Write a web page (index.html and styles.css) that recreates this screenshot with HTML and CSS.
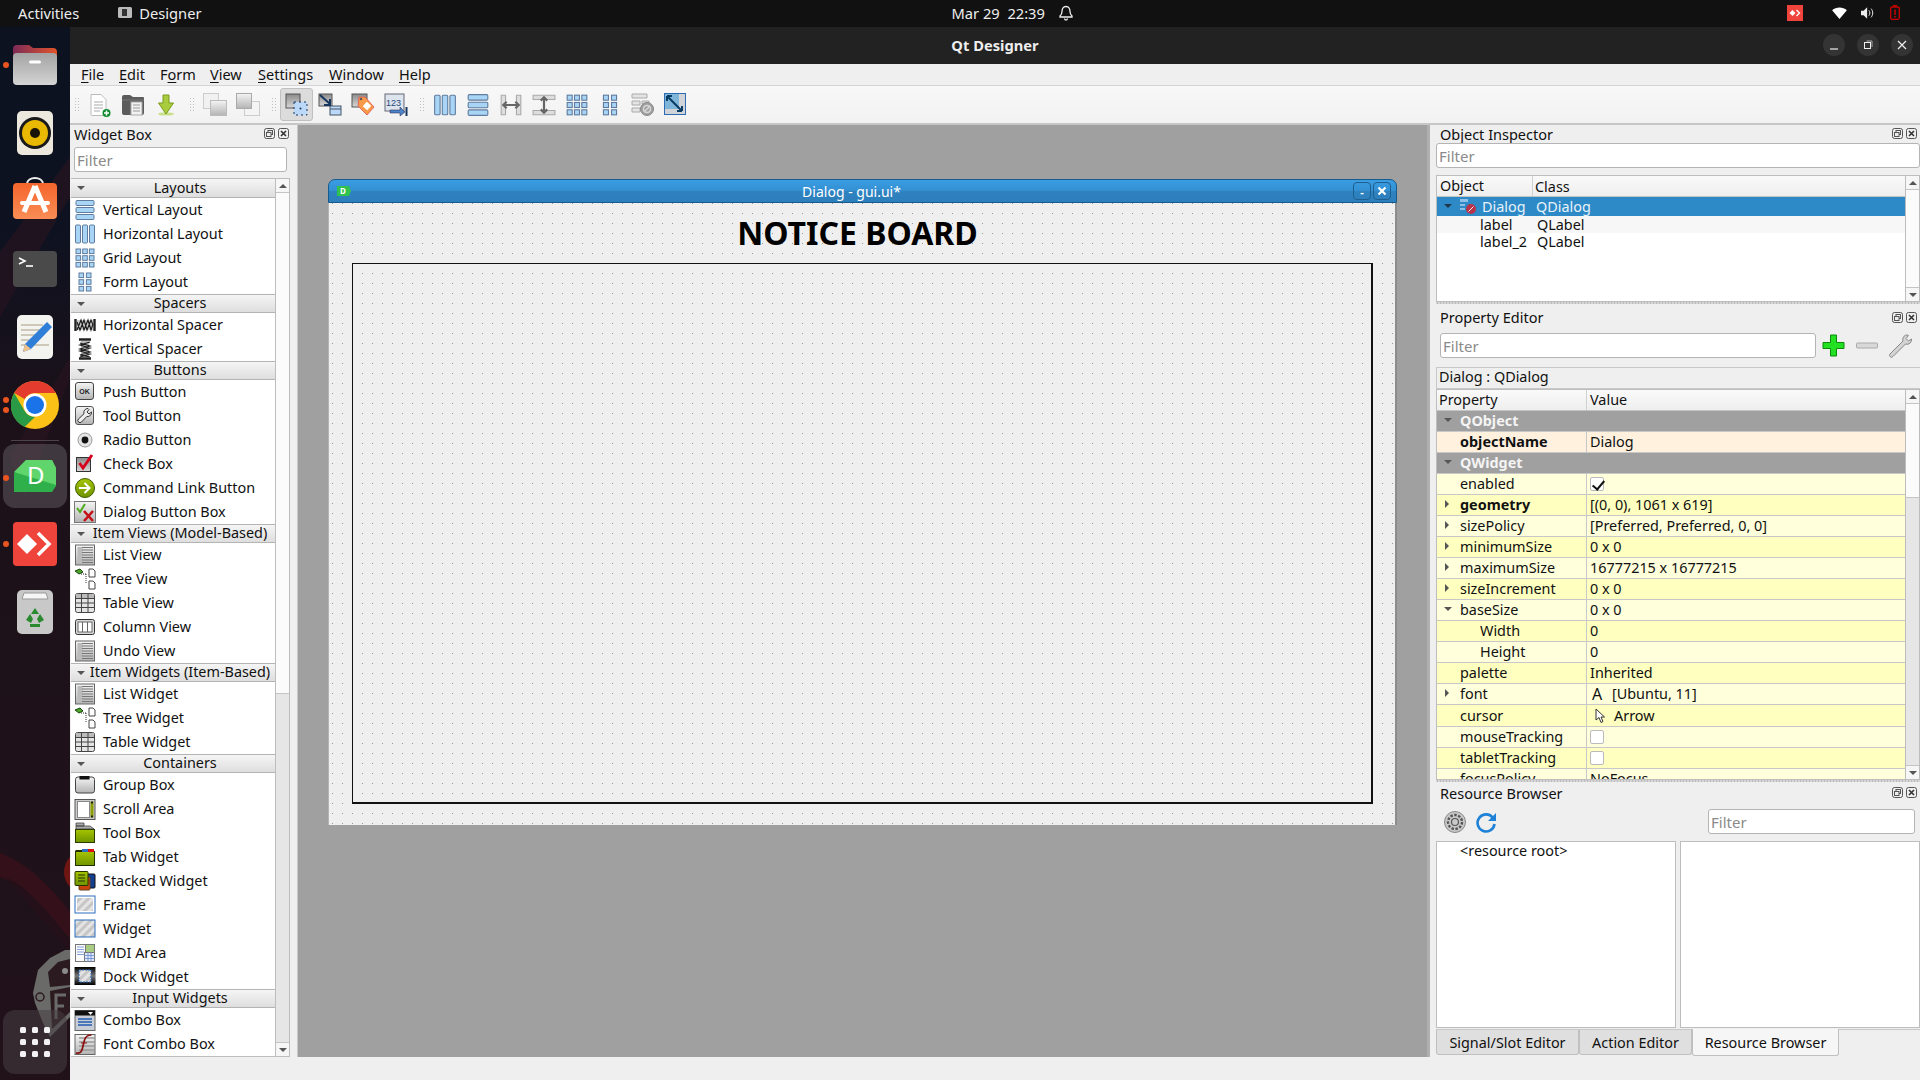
FILE: index.html
```html
<!DOCTYPE html>
<html lang="en">
<head>
  <meta charset="UTF-8">
  <title>Qt Designer</title>
  <link rel="stylesheet" href="styles.css">
</head>
<body>

<!-- icon sheet -->
<svg class="sheet" xmlns="http://www.w3.org/2000/svg">
  <defs>
    <linearGradient id="g-gray" x1="0" y1="0" x2="0" y2="1"><stop offset="0" stop-color="#f4f4f4"/><stop offset="1" stop-color="#b4b4b4"/></linearGradient>
    <linearGradient id="g-dark" x1="0" y1="0" x2="0" y2="1"><stop offset="0" stop-color="#8a8a8a"/><stop offset="1" stop-color="#d8d8d8"/></linearGradient>
    <linearGradient id="g-green" x1="0" y1="0" x2="0" y2="1"><stop offset="0" stop-color="#a6c400"/><stop offset="1" stop-color="#6f9400"/></linearGradient>
    <linearGradient id="g-black" x1="0" y1="0" x2="0" y2="1"><stop offset="0" stop-color="#000"/><stop offset=".5" stop-color="#777"/><stop offset="1" stop-color="#000"/></linearGradient>
    <linearGradient id="g-folder" x1="0" y1="0" x2="0" y2="1"><stop offset="0" stop-color="#a3a3a3"/><stop offset="1" stop-color="#d4d4d4"/></linearGradient>
    <linearGradient id="g-flap" x1="0" y1="0" x2="1" y2="0"><stop offset="0" stop-color="#7c2a58"/><stop offset="1" stop-color="#e2552a"/></linearGradient>
    <linearGradient id="g-store" x1="0" y1="0" x2="0" y2="1"><stop offset="0" stop-color="#f5652c"/><stop offset="1" stop-color="#f98d55"/></linearGradient>
    <pattern id="p-hatch" width="6" height="6" patternUnits="userSpaceOnUse" patternTransform="rotate(45)"><rect width="6" height="6" fill="#e4e4e4"/><rect width="3" height="6" fill="#c6c6c6"/></pattern>

    <symbol id="i-vlay" viewBox="0 0 22 22"><g fill="#a8d4f6" stroke="#5f7c9e"><rect x="2" y="1.500" width="18" height="5" rx="1"/><rect x="2" y="8.500" width="18" height="5" rx="1"/><rect x="2" y="15.500" width="18" height="5" rx="1"/></g></symbol>
    <symbol id="i-hlay" viewBox="0 0 22 22"><g fill="#a8d4f6" stroke="#5f7c9e"><rect x="1.500" y="2" width="5" height="18" rx="1"/><rect x="8.500" y="2" width="5" height="18" rx="1"/><rect x="15.500" y="2" width="5" height="18" rx="1"/></g></symbol>
    <symbol id="i-grid" viewBox="0 0 22 22"><g fill="#a8d4f6" stroke="#5f7c9e"><rect x="2" y="2" width="4.600" height="4.600"/><rect x="8.700" y="2" width="4.600" height="4.600"/><rect x="15.400" y="2" width="4.600" height="4.600"/><rect x="2" y="8.700" width="4.600" height="4.600"/><rect x="8.700" y="8.700" width="4.600" height="4.600"/><rect x="15.400" y="8.700" width="4.600" height="4.600"/><rect x="2" y="15.400" width="4.600" height="4.600"/><rect x="8.700" y="15.400" width="4.600" height="4.600"/><rect x="15.400" y="15.400" width="4.600" height="4.600"/></g></symbol>
    <symbol id="i-form" viewBox="0 0 22 22"><g fill="#a8d4f6" stroke="#5f7c9e"><rect x="5" y="2" width="4.600" height="4.600"/><rect x="12.400" y="2" width="4.600" height="4.600"/><rect x="5" y="8.700" width="4.600" height="4.600"/><rect x="12.400" y="8.700" width="4.600" height="4.600"/><rect x="5" y="15.400" width="4.600" height="4.600"/><rect x="12.400" y="15.400" width="4.600" height="4.600"/></g></symbol>
    <symbol id="i-hspace" viewBox="0 0 22 22"><path d="M1.500 5v12M20.500 5v12" stroke="#222" stroke-width="2.400"/><path d="M3 6h16v10H3z" fill="#ccc"/><path d="M3 16l4-10 3 10 4-10 3 10 2-6M3 8l3 8 4-10 3 10 4-10 2 5" fill="none" stroke="#1d1d1d" stroke-width="1.200"/></symbol>
    <symbol id="i-vspace" viewBox="0 0 22 22"><path d="M5 1.500h12M5 20.500h12" stroke="#222" stroke-width="2.400"/><path d="M7 3h8v16H7z" fill="#bbb"/><path d="M6 5l10 3-10 3 10 3-10 3 10 2M16 4L6 7l10 3-10 3 10 3-10 3" fill="none" stroke="#1d1d1d" stroke-width="1.200"/></symbol>
    <symbol id="i-push" viewBox="0 0 22 22"><rect x="1.500" y="1.500" width="18" height="17" rx="2.500" fill="url(#g-gray)" stroke="#444"/><text x="10.500" y="12.500" class="ok">OK</text></symbol>
    <symbol id="i-tool" viewBox="0 0 22 22"><rect x="1.500" y="1.500" width="18" height="18" rx="2.500" fill="url(#g-gray)" stroke="#555"/><path d="M14 3.500a4 4 0 0 0-4 5.200L4.500 14a2 2 0 0 0 3 3l5.300-5.500A4 4 0 0 0 17.500 7l-2.500 2-2-2 2-2.500z" fill="#eee" stroke="#333"/></symbol>
    <symbol id="i-radio" viewBox="0 0 22 22"><circle cx="11" cy="11" r="7" fill="#e4e4e4" stroke="#999"/><circle cx="11" cy="11" r="3.400" fill="#111"/></symbol>
    <symbol id="i-check" viewBox="0 0 22 22"><rect x="2.500" y="4.500" width="14" height="14" fill="url(#g-dark)" stroke="#333"/><path d="M5.500 10l3.500 5 9-13" fill="none" stroke="#d5001c" stroke-width="2.800"/></symbol>
    <symbol id="i-cmd" viewBox="0 0 22 22"><circle cx="11" cy="11" r="9.500" fill="url(#g-green)" stroke="#3e5a00"/><path d="M5 11h10M10.500 6l5 5-5 5" fill="none" stroke="#fff" stroke-width="2"/></symbol>
    <symbol id="i-dbox" viewBox="0 0 22 22"><rect x=".5" y=".5" width="21" height="21" fill="url(#g-gray)" stroke="#777"/><path d="M3 7l3 4 5-8" fill="none" stroke="#4cab1c" stroke-width="2"/><path d="M10 10l9 10M19 10l-9 10" stroke="#c4111a" stroke-width="2.600"/></symbol>
    <symbol id="i-list" viewBox="0 0 22 22"><rect x="1.500" y="1" width="19" height="20" fill="url(#g-gray)" stroke="#666"/><path d="M6 3v16" stroke="#bbb" stroke-width="5"/><path d="M8 3.500h11M8 6h11M8 8.500h11M8 11h11M8 13.500h11M8 16h11M8 18.500h11" stroke="#777"/></symbol>
    <symbol id="i-tree" viewBox="0 0 22 22"><path d="M1 3l5-2 3 3-4 2z" fill="#4ea32d" stroke="#17470a"/><path d="M7 6h5M12 6v10" stroke="#333" stroke-dasharray="1 1"/><path d="M15 1h4l2 2v6h-6zM15 13h4l2 2v6h-6z" fill="#fff" stroke="#444"/></symbol>
    <symbol id="i-table" viewBox="0 0 22 22"><rect x="1.500" y="1.500" width="19" height="19" rx="2" fill="#e4e4e4" stroke="#444"/><rect x="2" y="2" width="18" height="4" fill="#bbb"/><path d="M1.500 6.500h19M1.500 11h19M1.500 15.500h19M7.500 1.500v19M14 1.500v19" stroke="#444"/></symbol>
    <symbol id="i-column" viewBox="0 0 22 22"><rect x="1.500" y="3.500" width="19" height="15" rx="2" fill="#d8d8d8" stroke="#333"/><rect x="4" y="6" width="14" height="10" fill="#fff" stroke="#666"/><path d="M8.500 6v10M13.500 6v10" stroke="#666"/></symbol>
    <symbol id="i-group" viewBox="0 0 22 22"><rect x="1.500" y="3" width="19" height="16" rx="2.500" fill="url(#g-gray)" stroke="#444"/><rect x="5.500" y="2" width="10" height="3.500" fill="#111"/></symbol>
    <symbol id="i-scroll" viewBox="0 0 22 22"><rect x="1" y="1.500" width="20" height="20" fill="#ccc" stroke="#555"/><rect x="3.500" y="3.500" width="12" height="16" fill="#fff" stroke="#888"/><rect x="16.500" y="3.500" width="3" height="16" fill="#8ba000"/><path d="M17 3.500h2v2h-2zM17 17.500h2v2h-2z" fill="#222"/></symbol>
    <symbol id="i-toolbox" viewBox="0 0 22 22"><path d="M2 1h8v3H2zM2 4h14l4 3H2z" fill="#aaa" stroke="#444" stroke-width=".8"/><rect x="1.500" y="7.500" width="19" height="13" fill="url(#g-green)" stroke="#2b3a00"/></symbol>
    <symbol id="i-tab" viewBox="0 0 22 22"><rect x="1.500" y="5.500" width="19" height="14" fill="url(#g-green)" stroke="#223000"/><rect x="8" y="3" width="6" height="3" fill="#2a6fc4"/><rect x="14" y="3" width="6" height="3" fill="#d11"/><rect x="1.500" y="4" width="6.500" height="2" fill="#223000"/></symbol>
    <symbol id="i-stack" viewBox="0 0 22 22"><rect x="11" y="4" width="10" height="14" rx="1" fill="#123f8e" stroke="#111"/><rect x="5" y="7" width="11" height="13" rx="1" fill="#c9420b" stroke="#642"/><rect x="1" y="1.500" width="13" height="14" rx="1" fill="url(#g-green)" stroke="#273400"/><path d="M4 5h7M4 8h7M4 11h7" stroke="#223000"/></symbol>
    <symbol id="i-frame" viewBox="0 0 22 22"><rect x="1" y="2" width="20" height="17" fill="#fff" stroke="#2a6dbd"/><rect x="3" y="4" width="16" height="13" fill="url(#p-hatch)"/></symbol>
    <symbol id="i-widget" viewBox="0 0 22 22"><rect x="1" y="2" width="20" height="17" fill="url(#p-hatch)" stroke="#2a6dbd"/></symbol>
    <symbol id="i-mdi" viewBox="0 0 22 22"><rect x="1.500" y="2.500" width="10" height="17" fill="#fafafa" stroke="#777"/><rect x="11.500" y="2.500" width="9" height="8" fill="#a8cc82" stroke="#777"/><rect x="10.500" y="10.500" width="10" height="9" fill="#dbe7f8" stroke="#777"/><path d="M3 5h7M3 7.500h7M3 10h7M3 12.500h7M10.500 13.500h10M10.500 16.500h10M14 10.500v9M17 10.500v9" stroke="#6a8cd0" stroke-width=".8"/></symbol>
    <symbol id="i-dock" viewBox="0 0 22 22"><rect x=".5" y="1" width="21" height="18" fill="url(#g-black)"/><rect x="5" y="4" width="12" height="12" fill="url(#p-hatch)" stroke="#2a6dbd" stroke-dasharray="2 1"/></symbol>
    <symbol id="i-combo" viewBox="0 0 22 22"><rect x="1" y="1.500" width="20" height="20" fill="#c8ccd4" stroke="#666"/><rect x="1" y="1.500" width="20" height="5" fill="#111"/><path d="M14 3h5l-2.500 3z" fill="#fff"/><path d="M4 10h14M4 13h14M4 16h14" stroke="#4a78bb" stroke-width="2"/></symbol>
    <symbol id="i-fcombo" viewBox="0 0 22 22"><rect x="1" y="1.500" width="20" height="20" fill="url(#g-gray)" stroke="#666"/><path d="M5 5h16M5 9h16M5 13h16M5 17h16" stroke="#999" stroke-width="1.400"/><path d="M2 20c5 1 6-2 7-7l1.500-6c1-3.500 3-5 7-5" fill="none" stroke="#8a1010" stroke-width="1.700"/><path d="M7 10h6" stroke="#8a1010"/></symbol>

    <symbol id="t-new" viewBox="0 0 24 24"><path d="M3 1.500h10l5 5v15a1 1 0 0 1-1 1H4a1 1 0 0 1-1-1z" fill="#fff" stroke="#bbb"/><path d="M6 9h9M6 12h9M6 15h9M6 18h6" stroke="#aaa"/><circle cx="18.500" cy="20" r="4" fill="#0e8a2e"/><path d="M18.500 17.500v5M16 20h5" stroke="#fff" stroke-width="1.500"/></symbol>
    <symbol id="t-open" viewBox="0 0 24 24"><path d="M1 4a2 2 0 0 1 2-2h6l3 2h10a1 1 0 0 1 1 1v15a2 2 0 0 1-2 2H3a2 2 0 0 1-2-2z" fill="#5c5c5c"/><path d="M1 7h22" stroke="#777"/><rect x="10" y="9" width="11" height="13" fill="#f2f2f2" stroke="#aaa"/><path d="M12 12h7M12 15h7M12 18h7" stroke="#999"/></symbol>
    <symbol id="t-save" viewBox="0 0 24 24"><ellipse cx="12" cy="21" rx="8" ry="1.600" fill="#c9e08a"/><path d="M9 2h6v8h4.500L12 21 4.500 10H9z" fill="#a9cc3e" stroke="#7a9b1a"/></symbol>
    <symbol id="t-back" viewBox="0 0 24 24"><rect x=".5" y=".5" width="15" height="15" fill="#f1f1f1" stroke="#ccc"/><rect x="7.500" y="7.500" width="16" height="15" fill="url(#g-gray)" stroke="#bbb"/></symbol>
    <symbol id="t-front" viewBox="0 0 24 24"><rect x="8.500" y="8.500" width="15" height="14" fill="#f4f4f4" stroke="#ccc"/><rect x=".5" y=".5" width="15" height="15" fill="url(#g-gray)" stroke="#aaa"/></symbol>
    <symbol id="t-edit" viewBox="0 0 24 24"><rect x="1" y="1" width="14" height="14" fill="url(#g-dark)" stroke="#555"/><rect x="9" y="9" width="13" height="13" fill="#bcd8f8" stroke="#17365f" stroke-dasharray="2 3"/><circle cx="15.500" cy="15.500" r="1" fill="#17365f"/></symbol>
    <symbol id="t-signal" viewBox="0 0 24 24"><rect x="1" y="1" width="13" height="12" fill="url(#g-dark)" stroke="#555"/><rect x="12" y="13" width="11" height="9" fill="#bcd8f8" stroke="#456"/><path d="M12 16h11" stroke="#456"/><path d="M2 2l10 9M12 6v6H6" fill="none" stroke="#17365f" stroke-width="2"/></symbol>
    <symbol id="t-buddy" viewBox="0 0 24 24"><rect x="1" y="1" width="15" height="13" fill="url(#g-dark)" stroke="#555"/><path d="M8 4h6l9 10-7 8-9-9z" fill="#f99a4a" stroke="#d55" stroke-width=".8"/><rect x="13" y="10" width="6" height="6" transform="rotate(42 16 13)" fill="#fff"/><circle cx="10" cy="6" r="1.200" fill="#555"/></symbol>
    <symbol id="t-tab" viewBox="0 0 24 24"><rect x="1" y="1" width="19" height="17" fill="#dde4ee" stroke="#667"/><text x="2" y="13" class="num">123</text><path d="M6 17h10v-3l5 5-5 4v-3H6z" fill="#4b84c8" stroke="#224" stroke-width=".5"/><path d="M22.500 14v9" stroke="#17365f" stroke-width="2"/></symbol>
    <symbol id="t-hsplit" viewBox="0 0 22 22"><path d="M2 2h4v18H2zM16 2h4v18h-4z" fill="#ddd" stroke="#aaa"/><path d="M3 11h16M7 8l-3 3 3 3M15 8l3 3-3 3" fill="none" stroke="#666" stroke-width="2"/></symbol>
    <symbol id="t-vsplit" viewBox="0 0 22 22"><path d="M1 2h20v4H1zM1 16h20v4H1z" fill="#ddd" stroke="#aaa"/><path d="M11 4v14M8 7l3-3 3 3M8 15l3 3 3-3" fill="none" stroke="#666" stroke-width="2"/></symbol>
    <symbol id="t-break" viewBox="0 0 24 24"><path d="M1 1h15v4H1zM1 8h8v4H1zM1 15h8v4H1zM11 8h7v3h-7z" fill="#e4e4e4" stroke="#aaa"/><circle cx="16" cy="16" r="6.500" fill="#a0a0a0" stroke="#888"/><circle cx="16" cy="16" r="3.500" fill="none" stroke="#d8d8d8" stroke-width="1.500"/><path d="M13 19l6-6" stroke="#d8d8d8" stroke-width="1.500"/></symbol>
    <symbol id="t-adjust" viewBox="0 0 24 24"><rect x=".5" y=".5" width="21" height="21" fill="#d0d4d8" stroke="#2d6bb3"/><rect x="1" y="1" width="14" height="15" fill="#7fb5d8"/><path d="M3 3l15 15M3 3v5M3 3h5M18 18v-5M18 18h-5" fill="none" stroke="#0a3d66" stroke-width="2"/></symbol>

    <symbol id="d-float" viewBox="0 0 11 11"><rect x=".5" y=".5" width="10" height="10" rx="2" fill="none" stroke="#555"/><rect x="4" y="2.500" width="4.500" height="4" fill="none" stroke="#555"/><rect x="2.500" y="4.500" width="4.500" height="4" fill="#efefef" stroke="#555"/></symbol>
    <symbol id="d-close" viewBox="0 0 11 11"><rect x=".5" y=".5" width="10" height="10" rx="2" fill="none" stroke="#555"/><path d="M3 3l5 5M8 3l-5 5" stroke="#333" stroke-width="1.600"/></symbol>
    <symbol id="i-dlg" viewBox="0 0 16 16"><path d="M0 1h8v3H0zM0 6h5v2H0zM0 10h5v2H0z" fill="#8fc0e8"/><circle cx="11" cy="11" r="5" fill="#b8334a"/><path d="M8.500 13.500l5-5" stroke="#eee"/></symbol>
  </defs>
</svg>

<div class="topbar">
  <span class="activities">Activities</span>
  <span class="app-name">
    <svg class="app-ic" viewBox="0 0 14 11"><rect width="14" height="11" rx="1.500" fill="#bbb"/><rect x="4" y="2" width="5" height="7" fill="#333"/></svg>
    Designer
  </span>
  <span class="clock">Mar 29&nbsp; 22:39
    <svg class="bell" viewBox="0 0 14 16"><path d="M7 1.500c-3 0-4 2.500-4 5 0 2.500-1 3.500-2 4.500v1h12v-1c-1-1-2-2-2-4.500s-1-5-4-5zM5.500 13.500a1.500 1.500 0 0 0 3 0" fill="none" stroke="#eee" stroke-width="1.300"/></svg>
  </span>
  <span class="tray">
    <svg class="tray-any" viewBox="0 0 16 16"><rect width="16" height="16" fill="#ef443b"/><path d="M5.500 5l3 3-3 3-3-3z" fill="#fff"/><path d="M9.500 5l3 3-3 3" fill="none" stroke="#fff" stroke-width="1.300"/></svg>
    <svg class="tray-wifi" viewBox="0 0 16 13"><path d="M0 3.500C4.500-.5 11.500-.5 16 3.500L8 13z" fill="#fff"/></svg>
    <svg class="tray-vol" viewBox="0 0 16 13"><path d="M0 4h3l4-4v13L3 9H0z" fill="#eee"/><path d="M9 3.500c1.500 1.500 1.500 4.500 0 6M11.500 1.500c2.500 3 2.500 7 0 10" fill="none" stroke="#eee" stroke-width="1.100"/></svg>
    <svg class="tray-bat" viewBox="0 0 10 15"><rect x=".7" y="2" width="8.600" height="12.300" rx="1.500" fill="none" stroke="#c00" stroke-width="1.300"/><path d="M3 .7h4" stroke="#c00" stroke-width="1.300"/><path d="M5 4.500v5.500M5 11v1.500" stroke="#c00" stroke-width="1.500"/></svg>
  </span>
</div>

<div class="desktop">
  <nav class="dock">
    <svg class="wall" viewBox="0 0 70 1053" preserveAspectRatio="none">
      <path d="M0 225L70 130V170L0 290zM10 430L70 330V350L25 470z" fill="#2a1420" opacity=".6"/>
      <path d="M0 826C25 835 50 858 70 885V912C50 888 30 862 0 850z" fill="#34101b"/>
      <path d="M5 850C25 858 45 880 70 915V925C48 900 28 875 5 850z" fill="#241018"/>
      <path d="M70 830C62 838 62 852 70 860z" fill="#701612"/>
      <path d="M65 923L50 931 38 943 33 966 35 976 43 996 50 1010 70 990V923z" fill="#6a6a68"/>
      <path d="M48 945L58 935 70 932V958L50 960zM50 964L70 960V985L52 1002z" fill="#2b1a20"/>
      <circle cx="65" cy="944" r="3" fill="#8a8a88"/>
      <path d="M56 992V968H66M56 979H64" fill="none" stroke="#6a6a68" stroke-width="3"/>
      <circle cx="40" cy="970" r="4" fill="none" stroke="#2b1a20" stroke-width="1.500"/>
    </svg>
    <a class="dock-item"><i class="run"></i>
      <svg class="dock-ic" viewBox="0 0 48 48"><path d="M2 8a4 4 0 0 1 4-4h12l4 3h20a4 4 0 0 1 4 4v14H2z" fill="url(#g-flap)"/><rect x="2" y="12" width="44" height="32" rx="4" fill="url(#g-folder)"/><rect x="18" y="19.500" width="12" height="3" rx="1.500" fill="#fff"/></svg>
    </a>
    <a class="dock-item">
      <svg class="dock-ic" viewBox="0 0 48 48"><rect x="6" y="2" width="36" height="44" rx="5" fill="#ece8de"/><circle cx="24" cy="24" r="16" fill="#1a1a1a"/><circle cx="24" cy="24" r="13" fill="#e9b800"/><circle cx="24" cy="24" r="5" fill="#1a1408"/></svg>
    </a>
    <a class="dock-item dock-up">
      <svg class="dock-ic" viewBox="0 0 48 48"><path d="M16 9c0-8 16-8 16 0" fill="none" stroke="#eee" stroke-width="2"/><rect x="2" y="8" width="44" height="36" rx="4" fill="url(#g-store)"/><path d="M24 11l-11 26M24 11l11 26" stroke="#fff" stroke-width="5" fill="none"/><rect x="9" y="26" width="30" height="4" rx="2" fill="#fff"/></svg>
    </a>
    <a class="dock-item">
      <svg class="dock-ic" viewBox="0 0 48 48"><rect x="2" y="6" width="44" height="36" rx="4" fill="#4a4a4a"/><path d="M8 13l6 3-6 3" fill="none" stroke="#fff" stroke-width="1.600"/><path d="M15 21h7" stroke="#fff" stroke-width="1.600"/></svg>
    </a>
    <a class="dock-item">
      <svg class="dock-ic" viewBox="0 0 48 48"><rect x="6" y="2" width="36" height="44" rx="5" fill="#f3f3f0"/><path d="M10 12h22M10 17h22M10 22h16M10 27h14M10 32h28" stroke="#cdc8b8" stroke-width="2"/><path d="M36 9l5 5-21 22-8 3 2-8z" fill="#2f7fd8"/><path d="M12 39l2-8 6 5z" fill="#eec08a"/></svg>
    </a>
    <a class="dock-item dock-chrome"><i class="run run-a"></i><i class="run run-b"></i>
      <svg class="dock-ic" viewBox="0 0 48 48"><circle cx="24" cy="24" r="24" fill="#fbc116"/><path d="M24 0a24 24 0 0 1 20.800 12H24a12 12 0 0 0-10.400 6L3.200 12A24 24 0 0 1 24 0z" fill="#e33b2e"/><path d="M3.200 12l10.400 18 .1.100A12 12 0 0 0 24 36L13.600 46A24 24 0 0 1 3.200 12z" fill="#2a9a47"/><circle cx="24" cy="24" r="11.500" fill="#fff"/><circle cx="24" cy="24" r="9" fill="#1a73e8"/></svg>
    </a>
    <hr class="dock-sep">
    <a class="dock-item dock-active"><i class="run"></i>
      <svg class="qd-ic" viewBox="0 0 42 32"><path d="M12 0h26l4 8v18l-4 6H0V13z" fill="#2fb04a"/><path d="M12 0h26l4 8v17L0 12z" fill="#5fd56c"/></svg>
      <span class="dock-d">D</span>
    </a>
    <a class="dock-item"><i class="run"></i>
      <svg class="dock-ic" viewBox="0 0 48 48"><rect x="2" y="2" width="44" height="44" rx="4" fill="#ef443b"/><path d="M16 14l10 10-10 10L6 24z" fill="#fff"/><path d="M27 13l11 11-11 11" fill="none" stroke="#fff" stroke-width="3.500"/></svg>
    </a>
    <a class="dock-item">
      <svg class="dock-ic" viewBox="0 0 48 48"><rect x="6" y="2" width="36" height="44" rx="5" fill="#c8c8c8"/><path d="M11 11l2-6h22l2 6z" fill="#f6f6f6" stroke="#999"/><path d="M24 20l4 6h-8zM15 32l4-6 3 5-2 4zM33 32l-4-6-3 5 2 4zM19 36h10v3H19z" fill="#2b8a30"/></svg>
    </a>
    <a class="dock-apps">
      <svg class="apps-ic" viewBox="0 0 30 30"><g fill="#f2f2f2"><rect width="6" height="6" rx="1.500"/><rect x="12" width="6" height="6" rx="1.500"/><rect x="24" width="6" height="6" rx="1.500"/><rect y="12" width="6" height="6" rx="1.500"/><rect x="12" y="12" width="6" height="6" rx="1.500"/><rect x="24" y="12" width="6" height="6" rx="1.500"/><rect y="24" width="6" height="6" rx="1.500"/><rect x="12" y="24" width="6" height="6" rx="1.500"/><rect x="24" y="24" width="6" height="6" rx="1.500"/></g></svg>
    </a>
  </nav>

  <div class="window">
    <div class="titlebar">
      <span class="title-text">Qt Designer</span>
      <span class="win-btns">
        <span class="win-btn"><svg viewBox="0 0 12 12"><path d="M2 10h8" stroke="#eee" stroke-width="1.200"/></svg></span>
        <span class="win-btn"><svg viewBox="0 0 12 12"><rect x="2.500" y="3.500" width="6" height="6" fill="none" stroke="#eee"/><path d="M4.500 2h5.500v6" fill="none" stroke="#aaa"/></svg></span>
        <span class="win-btn"><svg viewBox="0 0 12 12"><path d="M2 2l8 8M10 2l-8 8" stroke="#eee" stroke-width="1.200"/></svg></span>
      </span>
    </div>

    <div class="menubar">
      <span class="menu m-file"><u>F</u>ile</span>
      <span class="menu m-edit"><u>E</u>dit</span>
      <span class="menu m-form">F<u>o</u>rm</span>
      <span class="menu m-view"><u>V</u>iew</span>
      <span class="menu m-settings"><u>S</u>ettings</span>
      <span class="menu m-window"><u>W</u>indow</span>
      <span class="menu m-help"><u>H</u>elp</span>
    </div>

    <div class="toolbar">
      <span class="grip first"></span>
      <span class="tbtn"><svg><use href="#t-new"/></svg></span>
      <span class="tbtn"><svg><use href="#t-open"/></svg></span>
      <span class="tbtn"><svg><use href="#t-save"/></svg></span>
      <span class="grip"></span>
      <span class="tbtn"><svg><use href="#t-back"/></svg></span>
      <span class="tbtn"><svg><use href="#t-front"/></svg></span>
      <span class="grip"></span>
      <span class="tbtn on"><svg><use href="#t-edit"/></svg></span>
      <span class="tbtn"><svg><use href="#t-signal"/></svg></span>
      <span class="tbtn"><svg><use href="#t-buddy"/></svg></span>
      <span class="tbtn"><svg><use href="#t-tab"/></svg></span>
      <span class="grip"></span>
      <span class="tbtn"><svg><use href="#i-hlay"/></svg></span>
      <span class="tbtn"><svg><use href="#i-vlay"/></svg></span>
      <span class="tbtn"><svg><use href="#t-hsplit"/></svg></span>
      <span class="tbtn"><svg><use href="#t-vsplit"/></svg></span>
      <span class="tbtn"><svg><use href="#i-grid"/></svg></span>
      <span class="tbtn"><svg><use href="#i-form"/></svg></span>
      <span class="tbtn"><svg><use href="#t-break"/></svg></span>
      <span class="tbtn"><svg><use href="#t-adjust"/></svg></span>
    </div>

    <div class="workspace">
      <!-- Widget Box -->
      <aside class="left-dock">
        <div class="dock-title"><span>Widget Box</span><span class="dock-btns"><svg><use href="#d-float"/></svg><svg><use href="#d-close"/></svg></span></div>
        <div class="filter-row"><input class="filter" placeholder="Filter"></div>
        <div class="wb">
          <div class="wb-list">
            <div class="wb-head"><i class="tri-down"></i>Layouts</div>
            <div class="wb-item"><svg><use href="#i-vlay"/></svg>Vertical Layout</div>
            <div class="wb-item"><svg><use href="#i-hlay"/></svg>Horizontal Layout</div>
            <div class="wb-item"><svg><use href="#i-grid"/></svg>Grid Layout</div>
            <div class="wb-item"><svg><use href="#i-form"/></svg>Form Layout</div>
            <div class="wb-head"><i class="tri-down"></i>Spacers</div>
            <div class="wb-item"><svg><use href="#i-hspace"/></svg>Horizontal Spacer</div>
            <div class="wb-item"><svg><use href="#i-vspace"/></svg>Vertical Spacer</div>
            <div class="wb-head"><i class="tri-down"></i>Buttons</div>
            <div class="wb-item"><svg><use href="#i-push"/></svg>Push Button</div>
            <div class="wb-item"><svg><use href="#i-tool"/></svg>Tool Button</div>
            <div class="wb-item"><svg><use href="#i-radio"/></svg>Radio Button</div>
            <div class="wb-item"><svg><use href="#i-check"/></svg>Check Box</div>
            <div class="wb-item"><svg><use href="#i-cmd"/></svg>Command Link Button</div>
            <div class="wb-item"><svg><use href="#i-dbox"/></svg>Dialog Button Box</div>
            <div class="wb-head"><i class="tri-down"></i>Item Views (Model-Based)</div>
            <div class="wb-item"><svg><use href="#i-list"/></svg>List View</div>
            <div class="wb-item"><svg><use href="#i-tree"/></svg>Tree View</div>
            <div class="wb-item"><svg><use href="#i-table"/></svg>Table View</div>
            <div class="wb-item"><svg><use href="#i-column"/></svg>Column View</div>
            <div class="wb-item"><svg><use href="#i-list"/></svg>Undo View</div>
            <div class="wb-head"><i class="tri-down"></i>Item Widgets (Item-Based)</div>
            <div class="wb-item"><svg><use href="#i-list"/></svg>List Widget</div>
            <div class="wb-item"><svg><use href="#i-tree"/></svg>Tree Widget</div>
            <div class="wb-item"><svg><use href="#i-table"/></svg>Table Widget</div>
            <div class="wb-head"><i class="tri-down"></i>Containers</div>
            <div class="wb-item"><svg><use href="#i-group"/></svg>Group Box</div>
            <div class="wb-item"><svg><use href="#i-scroll"/></svg>Scroll Area</div>
            <div class="wb-item"><svg><use href="#i-toolbox"/></svg>Tool Box</div>
            <div class="wb-item"><svg><use href="#i-tab"/></svg>Tab Widget</div>
            <div class="wb-item"><svg><use href="#i-stack"/></svg>Stacked Widget</div>
            <div class="wb-item"><svg><use href="#i-frame"/></svg>Frame</div>
            <div class="wb-item"><svg><use href="#i-widget"/></svg>Widget</div>
            <div class="wb-item"><svg><use href="#i-mdi"/></svg>MDI Area</div>
            <div class="wb-item"><svg><use href="#i-dock"/></svg>Dock Widget</div>
            <div class="wb-head"><i class="tri-down"></i>Input Widgets</div>
            <div class="wb-item"><svg><use href="#i-combo"/></svg>Combo Box</div>
            <div class="wb-item"><svg><use href="#i-fcombo"/></svg>Font Combo Box</div>
          </div>
          <div class="vscroll wb-scroll"><span class="sb-btn"><i class="tri-up"></i></span><span class="sb-thumb"></span><span class="sb-btn end"><i class="tri-down"></i></span></div>
        </div>
      </aside>

      <!-- form area -->
      <main class="mdi">
        <div class="subwin">
          <div class="sub-title">
            <svg class="sub-ic" viewBox="0 0 16 12"><path d="M1 1h12l2 5-2 5H1z" fill="#2fc24e"/><text x="7" y="9" class="sub-d">D</text></svg>
            <span class="sub-text">Dialog - gui.ui*</span>
            <span class="sub-btn">-</span>
            <span class="sub-btn sub-close"><svg viewBox="0 0 10 10"><path d="M1.500 1.500l7 7M8.500 1.500l-7 7" stroke="#fff" stroke-width="2.200"/></svg></span>
          </div>
          <div class="form-body">
            <div class="notice">NOTICE BOARD</div>
            <div class="board"></div>
          </div>
        </div>
      </main>

      <!-- right docks -->
      <aside class="right-dock">
        <div class="dock-title"><span>Object Inspector</span><span class="dock-btns"><svg><use href="#d-float"/></svg><svg><use href="#d-close"/></svg></span></div>
        <div class="oi-filter"><input class="filter" placeholder="Filter"></div>
        <div class="oi">
          <div class="oi-main">
            <div class="oi-head"><span class="oi-c1">Object</span><span>Class</span></div>
            <div class="oi-row sel"><i class="tri-down"></i><svg class="oi-ic"><use href="#i-dlg"/></svg><span class="oi-c1">Dialog</span><span>QDialog</span></div>
            <div class="oi-row alt"><span class="oi-c1">label</span><span>QLabel</span></div>
            <div class="oi-row"><span class="oi-c1">label_2</span><span>QLabel</span></div>
          </div>
          <div class="vscroll"><span class="sb-btn"><i class="tri-up"></i></span><span class="sb-thumb full"></span><span class="sb-btn end"><i class="tri-down"></i></span></div>
        </div>
        <div class="splitter-h"></div>

        <div class="dock-title pe-title"><span>Property Editor</span><span class="dock-btns"><svg><use href="#d-float"/></svg><svg><use href="#d-close"/></svg></span></div>
        <div class="pe-bar">
          <input class="filter" placeholder="Filter">
          <svg class="pe-plus" viewBox="0 0 24 24"><path d="M8.500 1h6v7.500H22v6h-7.500V22h-6v-7.500H1v-6h7.500z" fill="#23e023" stroke="#0b8a0b"/></svg>
          <svg class="pe-minus" viewBox="0 0 24 24"><rect x="1.500" y="9" width="21" height="5" rx="1" fill="#d8d8d8" stroke="#aaa"/></svg>
          <svg class="pe-wrench" viewBox="0 0 24 24"><path d="M20 1a4.500 4.500 0 0 0-5 6L2 20a1.800 1.800 0 0 0 3 2.500L17.500 10A4.500 4.500 0 0 0 23.500 5l-3 2-2.500-2.500 2.500-3z" fill="#d4d4d4" stroke="#888"/></svg>
        </div>
        <div class="pe-object">Dialog : QDialog</div>
        <div class="pe">
          <div class="pe-main">
            <div class="pe-head"><span class="pn">Property</span><span class="pv">Value</span></div>
            <div class="pr grp"><span class="pn"><i class="tri-down"></i>QObject</span><span class="pv"></span></div>
            <div class="pr obj"><span class="pn b">objectName</span><span class="pv">Dialog</span></div>
            <div class="pr grp"><span class="pn"><i class="tri-down"></i>QWidget</span><span class="pv"></span></div>
            <div class="pr lo"><span class="pn">enabled</span><span class="pv"><i class="cbx on"></i></span></div>
            <div class="pr hi"><span class="pn b"><i class="tri-right"></i>geometry</span><span class="pv">[(0, 0), 1061 x 619]</span></div>
            <div class="pr lo"><span class="pn"><i class="tri-right"></i>sizePolicy</span><span class="pv">[Preferred, Preferred, 0, 0]</span></div>
            <div class="pr hi"><span class="pn"><i class="tri-right"></i>minimumSize</span><span class="pv">0 x 0</span></div>
            <div class="pr lo"><span class="pn"><i class="tri-right"></i>maximumSize</span><span class="pv">16777215 x 16777215</span></div>
            <div class="pr hi"><span class="pn"><i class="tri-right"></i>sizeIncrement</span><span class="pv">0 x 0</span></div>
            <div class="pr lo"><span class="pn"><i class="tri-down"></i>baseSize</span><span class="pv">0 x 0</span></div>
            <div class="pr hi"><span class="pn sub">Width</span><span class="pv">0</span></div>
            <div class="pr lo"><span class="pn sub">Height</span><span class="pv">0</span></div>
            <div class="pr hi"><span class="pn">palette</span><span class="pv">Inherited</span></div>
            <div class="pr lo"><span class="pn"><i class="tri-right"></i>font</span><span class="pv"><span class="font-a">A</span>[Ubuntu, 11]</span></div>
            <div class="pr hi tall"><span class="pn">cursor</span><span class="pv"><svg class="cursor-ic" viewBox="0 0 10 16"><path d="M1 1v11l3-2.500 2 5 2-1-2-4.500h3.500z" fill="#fff" stroke="#333"/></svg>Arrow</span></div>
            <div class="pr lo"><span class="pn">mouseTracking</span><span class="pv"><i class="cbx"></i></span></div>
            <div class="pr hi"><span class="pn">tabletTracking</span><span class="pv"><i class="cbx"></i></span></div>
            <div class="pr lo"><span class="pn">focusPolicy</span><span class="pv">NoFocus</span></div>
          </div>
          <div class="vscroll"><span class="sb-btn"><i class="tri-up"></i></span><span class="sb-thumb pe-thumb"></span><span class="sb-btn end"><i class="tri-down"></i></span></div>
        </div>
        <div class="splitter-h"></div>

        <div class="dock-title rb-title"><span>Resource Browser</span><span class="dock-btns"><svg><use href="#d-float"/></svg><svg><use href="#d-close"/></svg></span></div>
        <div class="rb-bar">
          <svg class="rb-gear" viewBox="0 0 22 22"><circle cx="11" cy="11" r="10.500" fill="#c8c8c8" stroke="#888"/><circle cx="11" cy="11" r="7" fill="none" stroke="#555" stroke-width="2.400" stroke-dasharray="2.500 1.500"/><circle cx="11" cy="11" r="3.500" fill="none" stroke="#555" stroke-width="1.200"/></svg>
          <svg class="rb-reload" viewBox="0 0 22 22"><path d="M18 7a8.500 8.500 0 1 0 1.500 6" fill="none" stroke="#1e82d8" stroke-width="2.600"/><path d="M21 2v8h-8z" fill="#1e82d8"/></svg>
          <input class="filter" placeholder="Filter">
        </div>
        <div class="rb-panes">
          <div class="rb-pane"><span class="rb-root">&lt;resource root&gt;</span></div>
          <div class="rb-pane"></div>
        </div>
        <div class="tabs">
          <span class="tab t-signal">Signal/Slot Editor</span>
          <span class="tab t-action">Action Editor</span>
          <span class="tab t-res">Resource Browser</span>
        </div>
      </aside>
    </div>
    <div class="statusbar"></div>
  </div>
</div>

</body>
</html>
```

FILE: styles.css
```css
/* Base Reset */
* {
  box-sizing: border-box;
  margin: 0;
  padding: 0;
}
html, body {
  width: 1920px;
  height: 1080px;
  overflow: hidden;
}
body {
  font-family: "Noto Sans", "Open Sans", sans-serif;
  font-size: 14.4px;
  color: #111;
  background: #efefef;
}
i {
  display: block;
}
.sheet {
  position: absolute;
  width: 0;
  height: 0;
}
.ok {
  font: 700 7px "Liberation Sans", sans-serif;
  text-anchor: middle;
  fill: #222;
}
.num {
  font: 9px "Liberation Sans", sans-serif;
  fill: #27477a;
}
.sub-d {
  font: 700 8px "Noto Sans", sans-serif;
  text-anchor: middle;
  fill: #fff;
}

/* GNOME top bar */
.topbar {
  height: 27px;
  background: #111;
  color: #eee;
  display: flex;
  align-items: center;
  padding-bottom: 2px;
  font-size: 14.7px;
  position: relative;
}
.activities {
  margin-left: 18px;
}
.app-name {
  margin-left: 39px;
  display: flex;
  align-items: center;
  gap: 7px;
}
.app-ic {
  width: 14px;
  height: 11px;
}
.clock {
  margin-left: 750px;
  display: flex;
  align-items: center;
  gap: 14px;
}
.bell {
  width: 14px;
  height: 16px;
}
.tray {
  margin-left: auto;
  display: flex;
  align-items: center;
}
.tray-any {
  width: 16px;
  height: 16px;
}
.tray-wifi {
  width: 15px;
  height: 12px;
  margin-left: 29px;
}
.tray-vol {
  width: 14px;
  height: 12px;
  margin-left: 14px;
}
.tray-bat {
  width: 10px;
  height: 15px;
  margin: 0 20px 0 15px;
}

.desktop {
  display: flex;
  height: 1053px;
}

/* launcher */
.dock {
  width: 70px;
  flex: none;
  position: relative;
  display: flex;
  flex-direction: column;
  align-items: center;
  padding-top: 4px;
  background: linear-gradient(180deg, #0c1220 0, #0e1220 200px, #1c1119 400px, #21121a 1053px);
  overflow: hidden;
}
.wall {
  position: absolute;
  inset: 0;
  width: 70px;
  height: 1053px;
}
.dock-item {
  position: relative;
  width: 64px;
  height: 68px;
  flex: none;
  display: flex;
  align-items: center;
  justify-content: center;
}
.dock-ic {
  width: 48px;
  height: 48px;
}
.dock-up .dock-ic {
  margin-top: -4px;
}
.run {
  position: absolute;
  left: 0;
  top: 31px;
  width: 6px;
  height: 6px;
  border-radius: 50%;
  background: #e95420;
}
.run-a {
  top: 26px;
}
.run-b {
  top: 36px;
}
.dock-sep {
  width: 48px;
  height: 1px;
  border: 0;
  background: #4a4448;
  position: relative;
  margin-top: 1px;
  margin-bottom: 1px;
}
.dock-active {
  height: 64px;
  margin: 2px 0;
  border-radius: 12px;
  background: rgba(120, 115, 120, .4);
}
.qd-ic {
  width: 42px;
  height: 32px;
}
.dock-d {
  position: absolute;
  left: 24px;
  top: 14px;
  font-size: 24px;
  line-height: 34px;
  color: #fff;
}
.dock-apps {
  margin-top: auto;
  margin-bottom: 6px;
  position: relative;
  width: 64px;
  height: 64px;
  border-radius: 12px;
  background: rgba(70, 62, 66, .55);
  display: flex;
  align-items: center;
  justify-content: center;
}
.apps-ic {
  width: 30px;
  height: 30px;
}

/* main window */
.window {
  flex: 1;
  display: flex;
  flex-direction: column;
  min-width: 0;
}
.titlebar {
  height: 37px;
  flex: none;
  background: #222;
  color: #eee;
  position: relative;
  display: flex;
  align-items: center;
  justify-content: center;
  padding-bottom: 2px;
}
.title-text {
  font-weight: 700;
  font-size: 14.7px;
}
.win-btns {
  position: absolute;
  right: 7px;
  top: 7px;
  display: flex;
  gap: 12px;
}
.win-btn {
  width: 22px;
  height: 22px;
  border-radius: 50%;
  background: #343434;
  display: flex;
  align-items: center;
  justify-content: center;
}
.win-btn svg {
  width: 12px;
  height: 12px;
}
.menubar {
  height: 22px;
  flex: none;
  background: #efefef;
  border-bottom: 1px solid #d4d4d4;
  display: flex;
  align-items: center;
  padding: 0 0 2px 11px;
  font-size: 14.5px;
}
.menu u {
  text-underline-offset: 2px;
}
.m-file { width: 38px; }
.m-edit { width: 41px; }
.m-form { width: 50px; }
.m-view { width: 48px; }
.m-settings { width: 71px; }
.m-window { width: 70px; }
.toolbar {
  height: 39px;
  flex: none;
  background: linear-gradient(180deg, #f8f8f8, #f2f2f2);
  border-bottom: 2px solid #c6c6c6;
  display: flex;
  align-items: center;
}
.grip {
  width: 6px;
  height: 15px;
  margin: 0 3px 0 7px;
  background: radial-gradient(circle at 1.500px 1.500px, #c0c0c0 .8px, transparent .9px) 0 0 / 3px 3px;
}
.grip.first {
  margin-left: 4px;
}
.tbtn {
  width: 33px;
  height: 33px;
  display: flex;
  align-items: center;
  justify-content: center;
  border-radius: 3px;
}
.tbtn svg {
  width: 24px;
  height: 24px;
}
.tbtn.on {
  background: #dcdcdc;
  border: 1px solid #c0c0c0;
}

/* three columns */
.workspace {
  flex: 1;
  display: flex;
  min-height: 0;
}
.left-dock {
  width: 227px;
  flex: none;
  padding-left: 1px;
  display: flex;
  flex-direction: column;
}
.dock-title {
  height: 21px;
  flex: none;
  display: flex;
  align-items: center;
  justify-content: space-between;
  padding: 0 0 4px 3px;
  font-size: 14.5px;
}
.dock-btns {
  display: flex;
  gap: 3px;
  margin-right: 3px;
}
.left-dock .dock-btns {
  margin-right: 8px;
}
.dock-btns svg {
  width: 11px;
  height: 11px;
}
.filter {
  display: block;
  width: 100%;
  height: 25px;
  border: 1px solid #b4b4b4;
  border-radius: 3px;
  background: #fff;
  padding: 0 2px;
  font: 15px "Noto Sans", sans-serif;
  outline: none;
}
.filter::placeholder {
  color: #8a8a8a;
  opacity: 1;
}
.filter-row {
  height: 32px;
  flex: none;
  margin-top: -1px;
  margin-bottom: 1px;
  padding: 2px 10px 0 3px;
}
.wb {
  height: 880px;
  margin-right: 7px;
  display: flex;
  border: 1px solid #bdbdbd;
  border-left: 0;
  background: #fff;
}
.wb-list {
  flex: 1;
  overflow: hidden;
}
.wb-head {
  height: 19px;
  position: relative;
  padding-left: 14px;
  text-align: center;
  line-height: 18px;
  background: linear-gradient(180deg, #f5f5f5, #dedede);
  border-bottom: 1px solid #b4b4b4;
  white-space: nowrap;
}
.wb-head:not(:first-child) {
  border-top: 1px solid #b4b4b4;
  line-height: 16px;
}
.wb-head .tri-down {
  position: absolute;
  left: 6px;
  top: 7px;
}
.wb-item {
  height: 24px;
  display: flex;
  align-items: center;
  padding: 0 0 2px 3px;
  gap: 7px;
  white-space: nowrap;
}
.wb-item svg {
  width: 22px;
  height: 22px;
  flex: none;
  margin-bottom: -1px;
}
.tri-down, .tri-up, .tri-right {
  width: 0;
  height: 0;
  border-style: solid;
}
.tri-down {
  border-width: 4px 4px 0;
  border-color: #555 transparent transparent;
}
.tri-up {
  border-width: 0 4px 4px;
  border-color: transparent transparent #555;
}
.tri-right {
  border-width: 4px 0 4px 4px;
  border-color: transparent transparent transparent #555;
}

/* scrollbars */
.vscroll {
  width: 14px;
  flex: none;
  display: flex;
  flex-direction: column;
  border-left: 1px solid #bdbdbd;
  background: #e6e6e6;
}
.sb-btn {
  height: 14px;
  flex: none;
  display: flex;
  align-items: center;
  justify-content: center;
  background: #f6f6f6;
  border-bottom: 1px solid #c4c4c4;
}
.sb-btn.end {
  margin-top: auto;
  border-bottom: 0;
  border-top: 1px solid #c4c4c4;
}
.sb-thumb {
  display: block;
  background: #fbfbfb;
  border-bottom: 1px solid #c4c4c4;
  height: 501px;
}
.sb-thumb.full {
  flex: 1;
  border: 0;
}
.pe-thumb {
  height: 94px;
}

/* MDI area */
.mdi {
  width: 1133px;
  flex: none;
  background: #a0a0a0;
  border-left: 1px solid #c8c8c8;
  border-right: 3px solid #b0b0b0;
  padding: 54px 0 0 30px;
}
.subwin {
  width: 1069px;
  height: 646px;
  display: flex;
  flex-direction: column;
}
.sub-title {
  height: 24px;
  flex: none;
  display: flex;
  align-items: center;
  padding: 0 5px 0 7px;
  color: #fff;
  background: linear-gradient(180deg, #3a9de2 0, #338fd2 50%, #2e82c0 52%, #2c7fbb 100%);
  border: 1px solid #175a8c;
  border-radius: 7px 7px 0 0;
}
.sub-ic {
  width: 16px;
  height: 12px;
}
.sub-text {
  flex: 1;
  text-align: center;
  font-size: 14px;
}
.sub-btn {
  width: 18px;
  height: 18px;
  margin-left: 2px;
  border: 1px solid #1f5f8f;
  border-radius: 4px;
  display: flex;
  align-items: center;
  justify-content: center;
  font-size: 11px;
  font-weight: 700;
}
.sub-close svg {
  width: 10px;
  height: 10px;
}
.form-body {
  flex: 1;
  background-color: #efefef;
  background-image: radial-gradient(circle at 3.500px .5px, #9a9a9a .6px, transparent .7px);
  background-size: 10px 10px;
  border-right: 2px solid #8c8c8c;
  border-left: 1px solid #b4b4b4;
  padding: 0 22px 0 23px;
}
.notice {
  height: 60px;
  padding: 10px 10px 0 0;
  text-align: center;
  font-size: 32px;
  line-height: 40px;
  font-weight: 700;
  color: #000;
}
.board {
  height: 541px;
  border: 2px solid #111;
  border-width: 1px 2px 2px 1px;
}

/* right side */
.right-dock {
  flex: 1;
  display: flex;
  flex-direction: column;
  padding-left: 6px;
  min-width: 0;
}
.right-dock .dock-title {
  padding-left: 4px;
}
.oi-filter {
  height: 25px;
  flex: none;
  margin-top: -3px;
  margin-bottom: 7px;
}
.oi {
  height: 127px;
  flex: none;
  display: flex;
  border: 1px solid #bdbdbd;
  background: #fff;
}
.oi-main {
  flex: 1;
  min-width: 0;
}
.oi-head {
  height: 21px;
  display: flex;
  align-items: center;
  background: linear-gradient(180deg, #fafafa, #eeeeee);
  border-bottom: 1px solid #c4c4c4;
  padding-left: 3px;
}
.oi-head .oi-c1 {
  width: 93px;
  height: 100%;
  line-height: 20px;
  border-right: 1px solid #d0d0d0;
  margin-right: 2px;
}
.oi-row {
  height: 17px;
  display: flex;
  align-items: center;
  padding-left: 43px;
  position: relative;
}
.oi-row .oi-c1 {
  width: 57px;
}
.oi-row.sel {
  height: 19px;
  background: #2e8ac6;
  color: #e8f2fa;
}
.oi-row.sel .oi-c1 {
  width: 54px;
  margin-left: 2px;
}
.oi-row.sel .tri-down {
  position: absolute;
  left: 7px;
  top: 7px;
  border-top-color: #22384a;
}
.oi-ic {
  position: absolute;
  left: 23px;
  top: 1px;
  width: 16px;
  height: 16px;
}
.oi-row.alt {
  background: #f7f7f7;
}
.splitter-h {
  height: 3px;
  flex: none;
  background: radial-gradient(circle at 1px 1px, #bbb .8px, transparent .9px) center / 3px 3px repeat-x;
}
.right-dock .pe-title {
  margin-top: 1px;
  height: 24px;
  padding-bottom: 2px;
}
.pe-bar {
  height: 25px;
  flex: none;
  display: flex;
  align-items: center;
  padding-left: 4px;
  margin-top: 3px;
}
.pe-bar .filter {
  width: 376px;
}
.pe-plus {
  width: 24px;
  height: 24px;
  margin-left: 6px;
}
.pe-minus {
  width: 24px;
  height: 24px;
  margin-left: 9px;
}
.pe-wrench {
  width: 24px;
  height: 24px;
  margin-left: 9px;
}
.pe-object {
  height: 22px;
  flex: none;
  margin-top: 9px;
  padding-left: 2px;
  line-height: 18px;
  border: 1px solid #c8c8c8;
  border-width: 1px 0 1px 1px;
}
.pe {
  height: 391px;
  flex: none;
  display: flex;
  border: 1px solid #bdbdbd;
  background: #fff;
  overflow: hidden;
}
.pe-main {
  flex: 1;
  min-width: 0;
  overflow: hidden;
}
.pe-head {
  height: 21px;
  display: flex;
  align-items: center;
  background: linear-gradient(180deg, #fafafa, #eeeeee);
  border-bottom: 1px solid #c4c4c4;
}
.pe-head .pn {
  padding-left: 2px;
  height: 100%;
  line-height: 20px;
}
.pe-head .pv {
  height: 100%;
  line-height: 20px;
  padding-left: 3px;
  border-left: 1px solid #d0d0d0;
}
.pn {
  width: 149px;
  flex: none;
  padding-left: 23px;
  position: relative;
  white-space: nowrap;
}
.pn .tri-down, .pn .tri-right {
  position: absolute;
  left: 7px;
  top: 7px;
}
.pn .tri-right {
  left: 8px;
  top: 5px;
}
.pn.sub {
  padding-left: 43px;
}
.pn.b {
  font-weight: 700;
}
.pv {
  flex: 1;
  padding-left: 3px;
  display: flex;
  align-items: center;
  height: 100%;
}
.pr {
  height: 21px;
  display: flex;
  align-items: center;
  border-bottom: 1px solid #c8c8c8;
  line-height: 20px;
}
.pr .pv {
  border-left: 1px solid #c8c8c8;
}
.pr.tall {
  height: 22px;
}
.pr.grp {
  background: #a0a0a0;
  color: #f4f4f4;
  font-weight: 700;
}
.pr.grp .pv {
  border-left: 0;
}
.pr.obj {
  background: #fff1de;
}
.pr.lo {
  background: #ffffdc;
}
.pr.hi {
  background: #ffffbf;
}
.cbx {
  width: 14px;
  height: 14px;
  border: 1px solid #bbb;
  border-radius: 2px;
  background: #fff;
  position: relative;
}
.cbx.on::after {
  content: "";
  position: absolute;
  left: 4px;
  top: 0;
  width: 5px;
  height: 10px;
  border: solid #111;
  border-width: 0 2px 2px 0;
  transform: rotate(40deg);
}
.font-a {
  font-size: 16px;
  width: 22px;
  padding-left: 2px;
}
.cursor-ic {
  width: 10px;
  height: 16px;
  margin: 0 9px 0 5px;
}

/* Resource Browser */
.right-dock .rb-title {
  height: 25px;
  padding-bottom: 6px;
}
.rb-bar {
  height: 27px;
  flex: none;
  display: flex;
  align-items: center;
  padding-left: 8px;
}
.rb-gear {
  width: 22px;
  height: 22px;
}
.rb-reload {
  width: 22px;
  height: 22px;
  margin-left: 9px;
}
.rb-bar .filter {
  width: 207px;
  margin-left: auto;
  margin-right: 5px;
}
.rb-panes {
  height: 187px;
  flex: none;
  margin-top: 6px;
  display: flex;
  gap: 4px;
}
.rb-pane {
  width: 240px;
  border: 1px solid #bdbdbd;
  background: #fff;
  padding-left: 23px;
  line-height: 18px;
}
.tabs {
  height: 27px;
  flex: none;
  display: flex;
  align-items: flex-start;
  margin-top: 1px;
  border-top: 1px solid #c8c8c8;
  position: relative;
}
.tab {
  height: 25px;
  display: flex;
  align-items: center;
  justify-content: center;
  background: #dfdfdf;
  border: 1px solid #c0c0c0;
  border-top: 0;
  border-radius: 0 0 3px 3px;
}
.t-signal { width: 143px; }
.t-action { width: 113px; }
.t-res {
  width: 147px;
  height: 27px;
  margin-top: -1px;
  background: #f6f6f6;
}
.statusbar {
  height: 23px;
  flex: none;
  background: #efefef;
}
```
